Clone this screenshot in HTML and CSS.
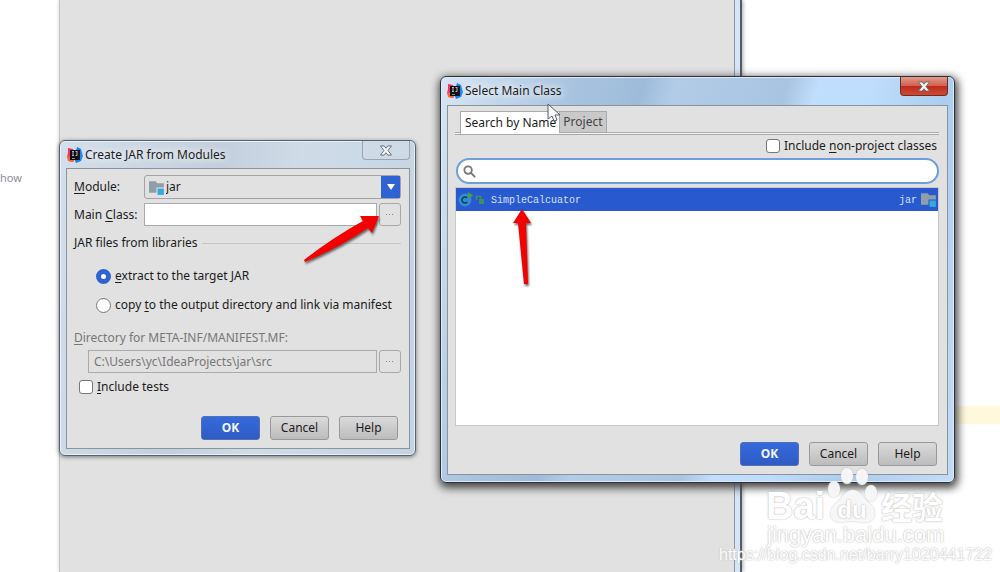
FILE: index.html
```html
<!DOCTYPE html>
<html lang="en">
<head>
  <meta charset="UTF-8" />
  <meta name="viewport" content="width=device-width, initial-scale=1.0" />
  <title>Select Main Class</title>
  <link rel="stylesheet" href="styles.css">
</head>
<body>

  <!-- Shared icons -->
  <svg class="sprite" aria-hidden="true">
    <symbol id="icon-idea" viewBox="0 0 16 16">
      <path d="M1 1l5 1 3 7-3 6-4-1-2-4 1-4z" fill="#fc2d63" />
      <path d="M0 9l4 1 3 4-2 1-4-1z" fill="#f7682f" />
      <path d="M10 0l4 2 2 7-2 5-5 2-2-5z" fill="#147ff5" />
      <path d="M3 3h10v10H3z" fill="#101014" />
      <path d="M5 4.500h2M6 5v3M5 8.500h2M8.500 4.500h2M10 5v3.500H8.500" fill="none" stroke="#b5b5ba" />
      <path d="M5 11.500h3" stroke="#88888c" />
    </symbol>
    <symbol id="icon-module" viewBox="0 0 16 16">
      <path d="M0 2h6l2 2h6v4H7v5H0z" fill="#8f9ea8" />
      <path d="M8 9h6v6H8z" fill="#35a8de" />
    </symbol>
  </svg>

  <main class="desktop">
    <div class="editor-left"><span>how</span></div>
    <div class="settings-panel"></div>
    <div class="editor-right"><div class="current-line"></div></div>

    <section class="window window-jar" aria-labelledby="jar-title">
      <header class="titlebar">
        <svg class="app-icon"><use href="#icon-idea" /></svg>
        <h1 id="jar-title">Create JAR from Modules</h1>
        <button type="button" class="close" aria-label="Close">
          <svg viewBox="0 0 14 12"><path d="M1 1h4l2 2.500L9 1h4L9.200 6 13 11H9L7 8.500 5 11H1l3.800-5z" /></svg>
        </button>
      </header>
      <form class="window-body jar-form">
        <div class="field module-row">
          <label for="module"><u>M</u>odule:</label>
          <div class="combo">
            <svg class="module-icon"><use href="#icon-module" /></svg>
            <select id="module"><option>jar</option></select>
            <span class="combo-arrow"></span>
          </div>
        </div>
        <div class="field class-row">
          <label for="main-class">Main <u>C</u>lass:</label>
          <input type="text" id="main-class" />
          <button type="button" class="browse" aria-label="Browse class"><i></i></button>
        </div>
        <fieldset>
          <legend>JAR files from libraries</legend>
          <label class="choice"><input type="radio" name="libs" checked /><span><u>e</u>xtract to the target JAR</span></label>
          <label class="choice"><input type="radio" name="libs" /><span>copy <u>t</u>o the output directory and link via manifest</span></label>
        </fieldset>
        <label class="muted" for="manifest-dir"><u>D</u>irectory for META-INF/MANIFEST.MF:</label>
        <div class="field dir-row">
          <input type="text" id="manifest-dir" value="C:\Users\yc\IdeaProjects\jar\src" disabled />
          <button type="button" class="browse" aria-label="Browse directory" disabled><i></i></button>
        </div>
        <label class="choice tests"><input type="checkbox" /><span><u>I</u>nclude tests</span></label>
        <div class="actions">
          <button type="button" class="btn primary">OK</button>
          <button type="button" class="btn">Cancel</button>
          <button type="button" class="btn">Help</button>
        </div>
      </form>
    </section>

    <section class="window window-class active" aria-labelledby="class-title">
      <header class="titlebar">
        <svg class="app-icon"><use href="#icon-idea" /></svg>
        <h1 id="class-title">Select Main Class</h1>
        <button type="button" class="close" aria-label="Close">
          <svg viewBox="0 0 14 12"><path d="M1 1h4l2 2.500L9 1h4L9.200 6 13 11H9L7 8.500 5 11H1l3.800-5z" /></svg>
        </button>
      </header>
      <div class="window-body class-form">
        <div class="tabs" role="tablist">
          <button type="button" role="tab" aria-selected="true">Search by Name</button>
          <button type="button" role="tab" aria-selected="false">Project</button>
        </div>
        <label class="choice non-project"><input type="checkbox" /><span>Include <u>n</u>on-project classes</span></label>
        <div class="search">
          <svg viewBox="0 0 14 14"><circle cx="5.500" cy="5.500" r="4" /><path d="M8.500 8.500L13 13" /></svg>
          <input type="text" aria-label="Class name" />
        </div>
        <ul class="results">
          <li>
            <svg class="class-icon" viewBox="0 0 26 16">
              <circle cx="7" cy="8" r="6.500" fill="#2f8dd0" />
              <path d="M9.200 6a3 3 0 1 0 0 4" fill="none" stroke="#183c62" stroke-width="1.500" />
              <path d="M10 0l5 3.500-5 3z" fill="#4da53a" />
              <path d="M21 7h5v5h-5z" fill="#3d8f5f" />
              <path d="M18.500 8V4.500h4V7" fill="none" stroke="#3d8f5f" stroke-width="1.500" />
            </svg>
            <span class="class-name">SimpleCalcuator</span>
            <span>jar</span>
            <svg class="module-icon"><use href="#icon-module" /></svg>
          </li>
        </ul>
        <div class="actions">
          <button type="button" class="btn primary">OK</button>
          <button type="button" class="btn">Cancel</button>
          <button type="button" class="btn">Help</button>
        </div>
      </div>
    </section>

    <!-- Hints drawn over the windows -->
    <svg class="hint hint-browse" viewBox="0 0 80 50">
      <path d="M77 2L58 2 61 7Q30 24 2 46l1 2Q38 33 66 14l4 5z" />
    </svg>
    <svg class="hint hint-class" viewBox="0 0 24 80">
      <path d="M10 0L1 14h5l6 61h4L14 14h5z" />
    </svg>
    <svg class="cursor" viewBox="0 0 14 20">
      <path d="M1 1v15l4-3 2 5 3-1-2-5h5z" />
    </svg>

    <div class="watermark">
      <div class="brand">
        <span class="bai">Bai</span>
        <span class="paw">
          <svg viewBox="0 0 52 58">
            <ellipse cx="8" cy="23" rx="6" ry="8" />
            <ellipse cx="21" cy="10" rx="6" ry="8" />
            <ellipse cx="36" cy="11" rx="6" ry="8" />
            <ellipse cx="45" cy="27" rx="6" ry="8" />
            <path d="M27 24c-8 0-10 7-15 12-11 8-9 20 3 20 5 0 7-1 12-1s9 2 13 1c11-1 11-13 2-20-6-5-8-12-15-12z" />
          </svg>
          <b>du</b>
        </span>
        <span class="jingyan" lang="zh">经验</span>
      </div>
      <div class="site">jingyan.baidu.com</div>
      <div class="blog">https://blog.csdn.net/barry1020441722</div>
    </div>
  </main>

</body>
</html>
```
FILE: styles.css
```css
:root {
  --panel: #e1e1e1;
  --accent: #2f62d3;
  --text: #1c1c1c;
}

* {
  box-sizing: border-box;
}

body {
  margin: 0;
  font-family: "Noto Sans", "Open Sans", sans-serif;
  font-size: 12px;
  line-height: 18px;
  color: var(--text);
  background: #fff;
}

button,
input,
select {
  font: inherit;
  color: inherit;
  margin: 0;
}

u {
  text-underline-offset: 2px;
}

.sprite {
  position: absolute;
  width: 0;
  height: 0;
}

.desktop {
  position: relative;
  display: grid;
  grid-template-columns: 59px 683px 1fr;
  min-height: 100vh;
  overflow: hidden;
}

.editor-left {
  padding-top: 169px;
  font-size: 11px;
  color: #8c9198;
}

.settings-panel {
  background: var(--panel);
  border-left: 1px solid #c4c4c4;
  border-right: 2px solid #525c66;
  box-shadow: inset -5px 0 #d5e5f5, inset -6px 0 #8d959e, 1px 0 4px #aaa;
}

.editor-right {
  padding-top: 406px;
}

.current-line {
  height: 18px;
  background: #fff8dc;
}

/* Windows */
.window {
  position: absolute;
  padding: 0 5px 6px 6px;
  border: 1px solid #59616a;
  border-radius: 6px;
  background: linear-gradient(100deg, #d3dfeb, #c3cfdc 40%, #cfdbe7 60%, #c4d3e2);
  box-shadow: inset 0 0 0 1px #e9f1f8, 0 1px 4px #777;
}

.window-jar {
  left: 59px;
  top: 140px;
  width: 357px;
}

.window-class {
  left: 440px;
  top: 76px;
  width: 515px;
}

.window.active {
  padding: 0 6px 7px;
  border-color: #2c3138;
  background: linear-gradient(105deg, #d8e6f5 0%, #a8c3df 22%, #9ebcda 33%, #b2cce8 38%, #a9c4e1 56%, #c0defd 61%, #bedcfb 70%, #adcdef 82%, #c1dcf7);
  box-shadow: inset 0 0 0 1px #deecfa, 1px 3px 9px 2px #444;
}

.titlebar {
  display: flex;
  align-items: center;
  gap: 2px;
  height: 27px;
  padding-left: 1px;
}

.titlebar h1 {
  flex: 1;
  margin: 0;
  font-size: 12px;
  font-weight: 400;
  text-shadow: 0 0 8px #fff, 0 0 8px #fff;
}

.app-icon {
  width: 16px;
  height: 16px;
}

.close {
  align-self: flex-start;
  display: grid;
  place-items: center;
  width: 48px;
  height: 19px;
  padding: 0;
  border: 1px solid #9aa5b1;
  border-top: 0;
  border-radius: 0 0 4px 4px;
  background: #cedae6;
}

.close svg {
  width: 14px;
  height: 11px;
  fill: #f4f4f4;
  stroke: #606a75;
}

.active .close {
  border-color: #6b2d28;
  background: linear-gradient(#e39a8c, #d2604f 48%, #bd2b1b 50%, #cf4a33);
}

.active .titlebar {
  height: 28px;
  padding-left: 0;
}

.window-body {
  border: 1px solid #8b9299;
  background: var(--panel);
}

/* Controls */
.field {
  display: flex;
}

.field label {
  width: 70px;
  align-self: center;
}

input[type="text"] {
  flex: 1;
  min-width: 0;
  height: 23px;
  padding: 0 5px;
  border: 1px solid #aaa;
  background: #fff;
  outline: 0;
}

input[type="text"]:disabled {
  color: #777;
  background: var(--panel);
}

.browse {
  display: grid;
  place-items: center;
  width: 22px;
  height: 23px;
  margin-left: 2px;
  padding: 0;
  border: 1px solid #a8a8a8;
  border-radius: 3px;
  background: var(--panel);
}

.browse i {
  width: 8px;
  height: 1px;
  background: repeating-linear-gradient(90deg, #888 0 1px, transparent 1px 3px);
}

.combo {
  flex: 1;
  display: flex;
  align-items: center;
  height: 24px;
  padding-left: 4px;
  border: 1px solid #a3a3a3;
  border-radius: 3px;
}

.combo select {
  flex: 1;
  padding: 0;
  border: 0;
  background: transparent;
  appearance: none;
}

.module-icon {
  width: 17px;
  height: 17px;
}

.combo-arrow {
  display: grid;
  place-items: center;
  align-self: stretch;
  width: 19px;
  background: var(--accent);
}

.combo-arrow::before {
  content: "";
  border: 4px solid transparent;
  border-top: 6px solid #fff;
  border-bottom: 0;
}

.choice {
  display: flex;
  align-items: center;
  gap: 4px;
  height: 20px;
}

.choice input {
  appearance: none;
  width: 14px;
  height: 14px;
  border: 1px solid #777;
  border-radius: 3px;
  background: #fff;
}

.choice input[type="radio"] {
  width: 15px;
  height: 15px;
  border-radius: 50%;
}

.choice input[type="radio"]:checked {
  border: 5px solid var(--accent);
}

.btn {
  width: 59px;
  height: 24px;
  padding: 0;
  border: 1px solid #999;
  border-radius: 3px;
  background: linear-gradient(#dadada, #bcbcbc);
}

.btn.primary {
  border-color: #5371b0;
  color: #f2f6ff;
  font-weight: 700;
  background: linear-gradient(#3669db, #2e5cc5);
}

.actions {
  display: flex;
  justify-content: flex-end;
  gap: 10px;
}

/* Create JAR */
.jar-form {
  padding: 6px 8px 8px 7px;
}

.class-row {
  margin-top: 4px;
}

fieldset {
  margin: 8px 0 0;
  padding: 0;
  border: 0;
}

legend {
  display: flex;
  align-items: center;
  gap: 4px;
  width: 100%;
  padding: 0;
}

legend::after {
  content: "";
  flex: 1;
  height: 1px;
  background: #c5c5c5;
}

fieldset .choice {
  margin: 14px 0 0 22px;
}

fieldset .choice + .choice {
  margin-top: 9px;
}

.muted {
  display: block;
  margin-top: 14px;
  color: #777;
}

.dir-row {
  margin: 3px 0 4px 14px;
}

.tests {
  margin-left: 5px;
}

.jar-form .actions {
  margin: 19px 3px 0 0;
}

/* Select Main Class */
.class-form {
  padding: 5px 8px 8px 7px;
}

.tabs {
  display: flex;
  padding-left: 5px;
  height: 24px;
  border-bottom: 1px solid #aaa;
  background: linear-gradient(#aaa, #aaa) 0 21px / 100% 1px no-repeat, linear-gradient(#f3f3f3, #f3f3f3) 0 22px / 100% 1px no-repeat;
}

.tabs button {
  height: 21px;
  padding: 0 3px;
  border: 1px solid #aaa;
  border-bottom: 0;
  background: #c9c9c9;
}

.tabs button[aria-selected="true"] {
  height: 23px;
  padding: 0 3px 0 4px;
  border-right: 0;
  background: #fff;
}

.tabs button[aria-selected="false"] {
  color: #444;
}

.non-project {
  justify-content: flex-end;
  margin: 1px 2px 2px 0;
}

.search {
  display: flex;
  align-items: center;
  height: 26px;
  margin-left: 1px;
  padding: 0 12px 0 5px;
  border: 2px solid #6e9edc;
  border-radius: 13px;
  background: #fff;
}

.search svg {
  width: 13px;
  height: 13px;
  fill: none;
  stroke: #777;
  stroke-width: 2;
}

.search input[type="text"] {
  height: 20px;
  border: 0;
}

.results {
  height: 239px;
  margin: 3px 0 16px;
  padding: 0;
  border: 1px solid #c8c8c8;
  list-style: none;
  background: #fff;
}

.results li {
  display: flex;
  align-items: center;
  height: 23px;
  padding-left: 2px;
  color: #d3e0fa;
  font-family: "Liberation Mono", monospace;
  font-size: 10px;
  background: #2859cf;
}

.results span {
  padding-top: 3px;
}

.class-icon {
  width: 26px;
  height: 16px;
}

.class-name {
  flex: 1;
  padding-left: 7px;
}

.results .module-icon {
  margin-left: 4px;
}

.class-form .actions {
  margin-right: 2px;
}

/* Hints */
.hint {
  position: absolute;
  fill: #f30000;
  filter: drop-shadow(1px 2px 1px #666);
}

.hint-browse {
  left: 302px;
  top: 214px;
  width: 80px;
  height: 50px;
}

.hint-class {
  left: 512px;
  top: 209px;
  width: 24px;
  height: 80px;
}

.cursor {
  position: absolute;
  left: 547px;
  top: 103px;
  width: 14px;
  height: 20px;
  fill: #f7f7f7;
  stroke: #555b66;
}

/* Watermark */
.watermark {
  position: absolute;
  right: 8px;
  bottom: 8px;
  width: 273px;
  font-family: "Liberation Sans", sans-serif;
  color: #fff;
  text-shadow: 0 0 2px #bbb, 0 0 1px #ccc;
}

.brand {
  display: flex;
  align-items: flex-end;
  height: 58px;
  padding-left: 47px;
  font-weight: 700;
}

.bai {
  width: 60px;
  font-size: 38px;
  line-height: 36px;
}

.paw {
  display: grid;
  width: 52px;
}

.paw > * {
  grid-area: 1 / 1;
}

.paw svg {
  width: 52px;
  height: 58px;
  fill: #fff;
  fill-opacity: 0.85;
  filter: drop-shadow(0 0 1px #bbb);
}

.paw b {
  z-index: 1;
  align-self: end;
  justify-self: center;
  font-size: 24px;
  line-height: 28px;
}

.jingyan {
  padding-left: 3px;
  font-family: "Noto Sans CJK SC", sans-serif;
  font-size: 31px;
  line-height: 36px;
}

.site {
  padding-left: 48px;
  font-size: 22px;
  line-height: 24px;
}

.blog {
  font-size: 16px;
  line-height: 18px;
}

.brand,
.site {
  margin-bottom: -1px;
}
```
